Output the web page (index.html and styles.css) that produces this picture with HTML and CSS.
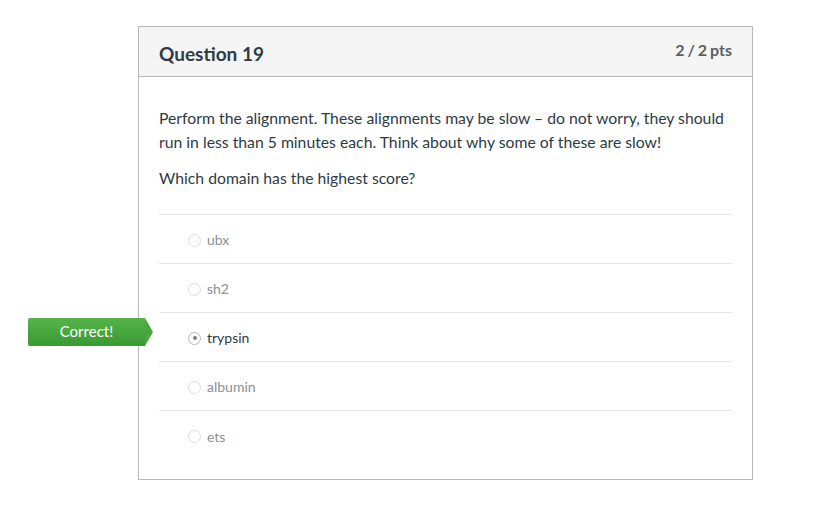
FILE: index.html
```html
<!DOCTYPE html>
<html>
<head>
<meta charset="utf-8">
<link rel="stylesheet" href="styles.css">
</head>
<body>
<div class="card">
  <div class="card-header">
    <h2 class="title">Question 19</h2>
    <div class="pts">2 / 2 pts</div>
  </div>
  <div class="card-body">
    <p class="text">Perform the alignment. These alignments may be slow – do not worry, they should run in less than 5 minutes each. Think about why some of these are slow!</p>
    <p class="text q">Which domain has the highest score?</p>
    <div class="answers">
      <div class="answer"><span class="radio"></span><span class="label">ubx</span></div>
      <div class="answer"><span class="radio"></span><span class="label">sh2</span></div>
      <div class="answer selected"><span class="badge">Correct!</span><span class="radio checked"></span><span class="label">trypsin</span></div>
      <div class="answer"><span class="radio"></span><span class="label">albumin</span></div>
      <div class="answer last"><span class="radio"></span><span class="label">ets</span></div>
    </div>
  </div>
</div>
</body>
</html>
```
FILE: styles.css
```css
html, body {
  margin: 0;
  padding: 0;
  background: #fff;
}
body {
  font-family: Lato, "Open Sans", sans-serif;
  color: #2d3b45;
  padding: 26px 0 0 138px;
}
.card {
  width: 613px;
  height: 452px;
  border: 1px solid #b8b8b8;
}
.card-header {
  background: #f5f5f5;
  border-bottom: 1px solid #b8b8b8;
  display: flex;
  justify-content: space-between;
  padding: 0 20px;
  box-sizing: border-box;
  height: 50px;
}
.title {
  margin: 0;
  font-size: 19px;
  font-weight: 700;
  line-height: 20px;
  padding-top: 17px;
  color: #2d3b45;
}
.pts {
  font-size: 16px;
  font-weight: 700;
  line-height: 20px;
  padding-top: 13px;
  color: #5b6065;
  word-spacing: -1px;
}
.card-body {
  padding: 29px 20px 0 20px;
}
.text {
  margin: 0;
  font-size: 15.75px;
  line-height: 24px;
}
.q {
  margin-top: 12px;
}
.answers {
  margin-top: 24px;
  border-top: 1px solid #e6e6e6;
}
.answer {
  position: relative;
  border-bottom: 1px solid #e6e6e6;
  display: flex;
  align-items: center;
  padding-left: 29px;
  padding-top: 2px;
  box-sizing: border-box;
  height: 49px;
}
.answer.last {
  border-bottom: none;
}
.radio {
  width: 13px;
  height: 13px;
  border: 1px solid #d9dcde;
  border-radius: 50%;
  box-sizing: border-box;
  margin-right: 6px;
  display: inline-flex;
  align-items: center;
  justify-content: center;
}
.radio.checked {
  border-color: #b5b9bc;
}
.radio.checked::after {
  content: "";
  width: 4px;
  height: 4px;
  border-radius: 50%;
  background: #7a7f84;
}
.label {
  font-size: 14px;
  color: #8b9196;
  line-height: 16px;
}
.selected .label {
  color: #2d3b45;
}
.badge {
  position: absolute;
  left: -131px;
  top: 5px;
  width: 117px;
  height: 28px;
  background: linear-gradient(#55b34a, #3a9a32);
  color: #fff;
  font-size: 15px;
  line-height: 27px;
  text-align: center;
  border-radius: 2px 0 0 2px;
  box-sizing: border-box;
}
.badge::after {
  content: "";
  position: absolute;
  right: -8px;
  top: 0;
  border-top: 14px solid transparent;
  border-bottom: 14px solid transparent;
  border-left: 8px solid #48a83f;
}
```
